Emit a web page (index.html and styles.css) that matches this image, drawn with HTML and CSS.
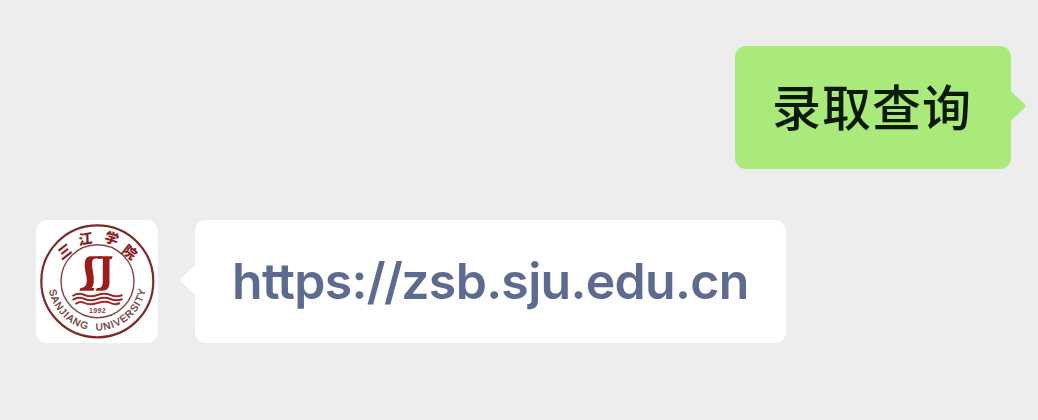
FILE: index.html
```html
<!DOCTYPE html>
<html lang="zh-CN">
<head>
  <meta charset="UTF-8">
  <meta name="viewport" content="width=device-width, initial-scale=1.0">
  <title>三江学院</title>
  <link rel="stylesheet" href="styles.css">
</head>
<body>

  <div class="chat">
    <!-- Sent message -->
    <div class="row sent">
      <div class="bubble">
        录取查询
        <svg class="tail" viewBox="0 0 16 34"><path d="M0 0 C2 4 5 6 14 14.500 Q17 17 14 19.500 C5 28 2 30 0 34 Z"/></svg>
      </div>
    </div>

    <!-- Reply -->
    <div class="row received">
      <svg class="avatar" viewBox="0 0 122 123">
        <defs>
          <path id="name-arc" d="M12.300 61.300 A49 49 0 0 0 110.300 61.300"/>
        </defs>
        <g class="rings">
          <circle cx="61.300" cy="61.300" r="56"/>
          <circle class="inner" cx="61.500" cy="61.300" r="36.500"/>
        </g>
        <g class="cn-name">
          <text transform="translate(29 32) rotate(-38) skewX(-12)" y="4.500">三</text>
          <text transform="translate(49.500 19.500) rotate(-10) skewX(-8)" y="4.500">江</text>
          <text transform="translate(75.500 18.800) rotate(18)" y="4.500">学</text>
          <text transform="translate(93.300 32.700) rotate(38)" y="4.500">院</text>
        </g>
        <g class="mark">
          <path d="M54 36.200 H66 L65 38.200 H60.500 Q56 38.500 56 43 Q56 47 57 52 Q58 57 57.800 62 Q57.500 66 55.500 68 H58.500 L57.500 70.800 H43.300 L44.500 68 Q50.500 68 50.800 61 Q51 57 49.500 52 Q48 46 49 41.500 Q50 36.600 54 36.200 Z"/>
          <path d="M62 36.200 H76.700 L75.500 39.200 H73.500 V63 Q73.500 70.800 66 70.800 H59.500 L61 68 H63 Q66.800 67.500 66.800 62 V38.800 H61 Z"/>
        </g>
        <g class="waves">
          <path d="M36.500 76 Q42.500 72.300 48.500 75 T61.500 75 T74.500 75 T86.500 75"/>
          <path d="M36.500 80 Q42.500 76.300 48.500 79 T61.500 79 T74.500 79 T86.500 79"/>
          <path d="M39.500 84 Q44 80.500 48.500 83 T61.500 83 T74.500 83 T84 83"/>
        </g>
        <text class="year" x="61.500" y="92.800">1992</text>
        <text class="en-name"><textPath href="#name-arc" startOffset="9" textLength="136">SANJIANG&#160; UNIVERSITY</textPath></text>
      </svg>
      <div class="bubble">
        <svg class="tail" viewBox="0 0 16 34"><path d="M16 0 C14 4 11 6 2 14.500 Q-1 17 2 19.500 C11 28 14 30 16 34 Z"/></svg>
        <a class="link">https:<span class="slashes">//</span>zsb.sju.edu.cn</a>
      </div>
    </div>
  </div>

</body>
</html>
```
FILE: styles.css
```css
body {
  margin: 0;
  background: #ededed;
  font-family: Inter, "Noto Sans CJK SC", sans-serif;
}

.chat {
  display: flex;
  flex-direction: column;
  gap: 51px;
  height: 420px;
  padding: 46px 27px 0 36px;
  box-sizing: border-box;
  overflow: hidden;
}

.row {
  display: flex;
  height: 123px;
}
.sent {
  justify-content: flex-end;
}
.received {
  gap: 37px;
}

.bubble {
  position: relative;
  display: flex;
  align-items: center;
  box-sizing: border-box;
  height: 123px;
  border-radius: 11px;
  white-space: nowrap;
}
.sent .bubble {
  width: 276px;
  padding-left: 37px;
  padding-bottom: 6px;
  background: #a9ea7a;
  color: #0b1a05;
  font-family: "Noto Sans CJK SC", sans-serif;
  font-size: 49px;
  font-weight: 500;
  letter-spacing: 1px;
}
.received .bubble {
  width: 591px;
  padding-left: 37px;
  padding-bottom: 2px;
  background: #fff;
}

/* Little arrow on the side of the bubble */
.tail {
  position: absolute;
  top: 43px;
  width: 16px;
  height: 34px;
}
.sent .tail {
  right: -15px;
  fill: #a9ea7a;
}
.received .tail {
  left: -15px;
  fill: #fff;
}

.link {
  color: #5d6b90;
  font-size: 50px;
  font-weight: 600;
  letter-spacing: -0.7px;
}
.slashes {
  letter-spacing: -1.7px;
}

.avatar {
  width: 122px;
  height: 123px;
  border-radius: 11px;
  background: #fff;
}
.rings {
  fill: none;
  stroke: #7d2a2a;
  stroke-width: 2.2;
}
.rings .inner {
  stroke: #854444;
  stroke-width: 1.4;
}
.cn-name {
  fill: #8a2020;
  font-family: "Noto Sans CJK SC", sans-serif;
  font-size: 14px;
  font-weight: 900;
  text-anchor: middle;
}
.mark {
  fill: #9c1c1c;
}
.waves {
  fill: none;
  stroke: #9c2b2b;
  stroke-width: 2;
}
.year {
  fill: #7a4040;
  font-family: "Liberation Sans", sans-serif;
  font-size: 7px;
  font-weight: 700;
  letter-spacing: 0.4px;
  text-anchor: middle;
}
.en-name {
  fill: #6b3232;
  font-family: "Liberation Sans", sans-serif;
  font-size: 10px;
  stroke: #6b3232;
  stroke-width: 0.3;
}
```
